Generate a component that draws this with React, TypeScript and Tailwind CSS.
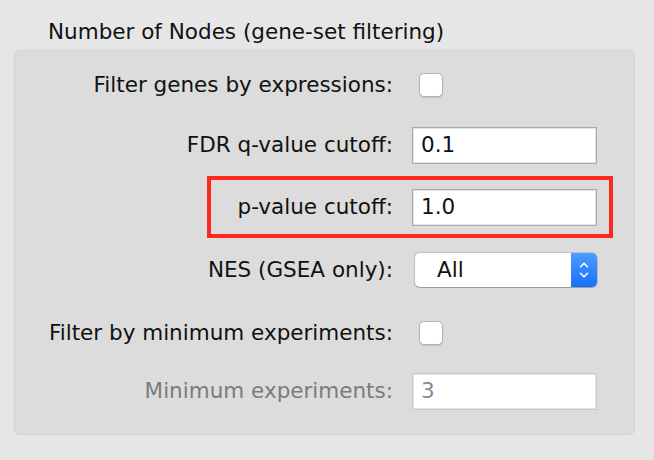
import { ChevronUp, ChevronDown } from 'lucide-react';

// --- row helpers ---
const Label = ({ children, muted = false }: { children: React.ReactNode; muted?: boolean }) => (
  <div className={`w-[378px] shrink-0 text-right ${muted ? 'text-[#7b7b7b]' : 'text-[#111]'}`}>
    {children}
  </div>
);

const Checkbox = () => (
  <div className="ml-[26px] w-[24px] h-[24px] rounded-[5px] bg-white border border-[#b4b4b4] shadow-[0_1px_1px_rgba(0,0,0,0.12)]"></div>
);

const TextField = ({ value, disabled = false }: { value: string; disabled?: boolean }) => (
  <div
    className={`ml-[19px] w-[185px] h-[37px] bg-white border flex items-center px-[8px] shadow-[inset_0_0_0_1px_#e4e4e4] ${
      disabled ? 'border-[#c9c9c9] text-[#8a8a8a]' : 'border-[#a9a9a9] text-[#111]'
    }`}
  >
    {value}
  </div>
);

export default function App() {
  return (
    <div
      className="w-[654px] h-[460px] bg-[#e6e6e6] text-[21.5px] leading-none overflow-hidden"
      style={{ fontFamily: '"DejaVu Sans", "Liberation Sans", sans-serif' }}
    >
      <div className="pl-[48px] pt-[21px] h-[50px] text-[#111]">Number of Nodes (gene-set filtering)</div>

      <div className="ml-[14px] w-[621px] h-[385px] bg-[#dcdcdc] border border-[#d2d2d2] rounded-[6px] pt-[5px] flex flex-col">
        <div className="h-[58px] flex items-center">
          <Label>Filter genes by expressions:</Label>
          <Checkbox />
        </div>

        <div className="h-[62px] flex items-center">
          <Label>FDR q-value cutoff:</Label>
          <TextField value="0.1" />
        </div>

        <div className="relative h-[62px] flex items-center">
          <Label>p-value cutoff:</Label>
          <TextField value="1.0" />
          {/* highlight box */}
          <div className="absolute left-[192px] top-0 w-[406px] h-[62px] border-[4px] border-[#fb2a1d]"></div>
        </div>

        <div className="h-[64px] flex items-center">
          <Label>NES (GSEA only):</Label>
          <div className="ml-[22px] w-[182px] h-[34px] flex rounded-[5px] bg-white shadow-[0_0_0_1px_rgba(0,0,0,0.12),0_1px_1px_rgba(0,0,0,0.2)] overflow-hidden">
            <div className="flex-1 flex items-center pl-[22px] text-[#111]">All</div>
            <div className="w-[26px] flex flex-col items-center justify-center bg-gradient-to-b from-[#4c9bff] to-[#1670fb] text-white">
              <ChevronUp size={14} strokeWidth={2.5} className="-mb-[2px]" />
              <ChevronDown size={14} strokeWidth={2.5} className="-mt-[2px]" />
            </div>
          </div>
        </div>

        <div className="h-[62px] flex items-center">
          <Label>Filter by minimum experiments:</Label>
          <Checkbox />
        </div>

        <div className="h-[54px] flex items-center">
          <Label muted>Minimum experiments:</Label>
          <TextField value="3" disabled />
        </div>
      </div>
    </div>
  );
}
